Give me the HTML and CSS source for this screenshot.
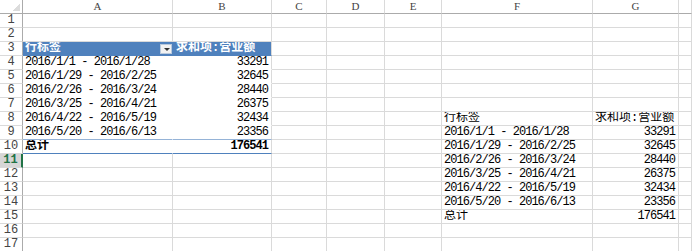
FILE: index.html
```html
<!DOCTYPE html>
<html lang="zh-CN">

<head>
    <meta charset="UTF-8">
    <title>数据透视表</title>
    <link rel="stylesheet" href="styles.css">
</head>

<body>
    <table class="sheet">
        <colgroup>
            <col class="w-hd">
            <col class="w-a">
            <col class="w-b">
            <col class="w-c">
            <col class="w-d">
            <col class="w-e">
            <col class="w-f">
            <col class="w-g">
            <col class="w-h">
        </colgroup>
        <tr class="cols">
            <th class="corner"></th>
            <th>A</th><th>B</th><th>C</th><th>D</th><th>E</th><th>F</th><th>G</th><th></th>
        </tr>
        <tr><th class="rh">1</th><td></td><td></td><td></td><td></td><td></td><td></td><td></td><td></td></tr>
        <tr><th class="rh">2</th><td></td><td></td><td></td><td></td><td></td><td></td><td></td><td></td></tr>
        <tr>
            <th class="rh">3</th>
            <td class="pv-hd cn"><span class="dd"></span>行标签</td>
            <td class="pv-hd pv-hd-b cn">求和项:营业额</td>
            <td></td><td></td><td></td><td></td><td></td><td></td>
        </tr>
        <tr><th class="rh">4</th><td class="pv">2016/1/1 - 2016/1/28</td><td class="pv-b num">33291</td><td></td><td></td><td></td><td></td><td></td><td></td></tr>
        <tr><th class="rh">5</th><td class="pv">2016/1/29 - 2016/2/25</td><td class="pv-b num">32645</td><td></td><td></td><td></td><td></td><td></td><td></td></tr>
        <tr><th class="rh">6</th><td class="pv">2016/2/26 - 2016/3/24</td><td class="pv-b num">28440</td><td></td><td></td><td></td><td></td><td></td><td></td></tr>
        <tr><th class="rh">7</th><td class="pv">2016/3/25 - 2016/4/21</td><td class="pv-b num">26375</td><td></td><td></td><td></td><td></td><td></td><td></td></tr>
        <tr>
            <th class="rh">8</th><td class="pv">2016/4/22 - 2016/5/19</td><td class="pv-b num">32434</td>
            <td></td><td></td><td></td><td class="cn">行标签</td><td class="cn">求和项:营业额</td><td></td>
        </tr>
        <tr>
            <th class="rh">9</th><td class="pv pv-last">2016/5/20 - 2016/6/13</td><td class="pv-b pv-last num">23356</td>
            <td></td><td></td><td></td><td>2016/1/1 - 2016/1/28</td><td class="num">33291</td><td></td>
        </tr>
        <tr>
            <th class="rh">10</th><td class="pv pv-tot cn">总计</td><td class="pv-b pv-tot num">176541</td>
            <td></td><td></td><td></td><td>2016/1/29 - 2016/2/25</td><td class="num">32645</td><td></td>
        </tr>
        <tr>
            <th class="rh on">11</th><td></td><td></td>
            <td></td><td></td><td></td><td>2016/2/26 - 2016/3/24</td><td class="num">28440</td><td></td>
        </tr>
        <tr>
            <th class="rh">12</th><td></td><td></td>
            <td></td><td></td><td></td><td>2016/3/25 - 2016/4/21</td><td class="num">26375</td><td></td>
        </tr>
        <tr>
            <th class="rh">13</th><td></td><td></td>
            <td></td><td></td><td></td><td>2016/4/22 - 2016/5/19</td><td class="num">32434</td><td></td>
        </tr>
        <tr>
            <th class="rh">14</th><td></td><td></td>
            <td></td><td></td><td></td><td>2016/5/20 - 2016/6/13</td><td class="num">23356</td><td></td>
        </tr>
        <tr>
            <th class="rh">15</th><td></td><td></td>
            <td></td><td></td><td></td><td class="cn">总计</td><td class="num">176541</td><td></td>
        </tr>
        <tr><th class="rh">16</th><td></td><td></td><td></td><td></td><td></td><td></td><td></td><td></td></tr>
        <tr><th class="rh">17</th><td></td><td></td><td></td><td></td><td></td><td></td><td></td><td></td></tr>
    </table>
</body>

</html>
```

FILE: styles.css
```css
* {
    margin: 0;
    padding: 0;
    box-sizing: border-box;
}

body {
    background: #fff;
    overflow: hidden;
    font-family: 'Liberation Mono', 'Noto Sans CJK SC', monospace;
    color: #000;
}

.sheet {
    border-collapse: separate;
    border-spacing: 0;
    table-layout: fixed;
    width: 692px;
}

/* largura das colunas */
.w-hd { width: 23px; }
.w-a { width: 150px; }
.w-b { width: 99px; }
.w-c { width: 55px; }
.w-d { width: 58px; }
.w-e { width: 57px; }
.w-f { width: 151px; }
.w-g { width: 86px; }
.w-h { width: 13px; }

.sheet tr {
    height: 14px;
}

.sheet td {
    border-right: 1px solid #dadada;
    border-bottom: 1px solid #dadada;
    padding: 0 2px;
    font-size: 12px;
    line-height: 13px;
    letter-spacing: -0.96px;
    white-space: nowrap;
    overflow: hidden;
    vertical-align: middle;
}

.sheet td.cn {
    letter-spacing: 0;
}

.sheet td.num {
    text-align: right;
    padding-right: 3px;
}

/* cabeçalho das colunas */
.cols th {
    font-family: 'Liberation Serif', serif;
    font-weight: normal;
    font-size: 11px;
    line-height: 13px;
    color: #444;
    border-right: 1px solid #dadada;
    border-bottom: 1px solid #ababab;
}

.cols th.corner {
    border-right: 1px solid #ababab;
    background: linear-gradient(135deg, transparent 50%, #dcdcdc 50%) right 2px bottom 2px / 7px 7px no-repeat;
}

/* números das linhas */
.rh {
    font-weight: normal;
    font-size: 12px;
    line-height: 13px;
    color: #444;
    text-align: center;
    border-right: 1px solid #ababab;
    border-bottom: 1px solid #dadada;
}

.rh.on {
    background: #d6d6d6;
    color: #217346;
    font-weight: bold;
    border-right: 2px solid #217346;
}

/* tabela dinâmica */
.sheet td.pv-hd {
    background: #4f81bd;
    color: #fff;
    font-weight: bold;
    border-bottom-color: #4f81bd;
    border-right-color: #4f81bd;
}

.sheet td.pv-hd-b {
    border-right-color: #dadada;
    padding-left: 3px;
}

.dd {
    float: right;
    width: 12px;
    height: 10px;
    margin-top: 2px;
    margin-right: -2px;
    background: #f2f2f2;
    border: 1px solid #b9c9dc;
    position: relative;
}

.dd::after {
    content: '';
    position: absolute;
    left: 3px;
    top: 3px;
    border-left: 3px solid transparent;
    border-right: 3px solid transparent;
    border-top: 3px solid #333;
}

.sheet td.pv {
    border-right-color: #fff;
    border-bottom-color: #fff;
}

.sheet td.pv-b {
    border-bottom-color: #fff;
}

.sheet td.pv-last {
    border-bottom-color: #95b3d7;
}

.sheet td.pv-tot {
    font-weight: bold;
    border-bottom: 1px solid #4f81bd;
}

.sheet td.pv.pv-tot {
    border-right-color: #fff;
}
```
